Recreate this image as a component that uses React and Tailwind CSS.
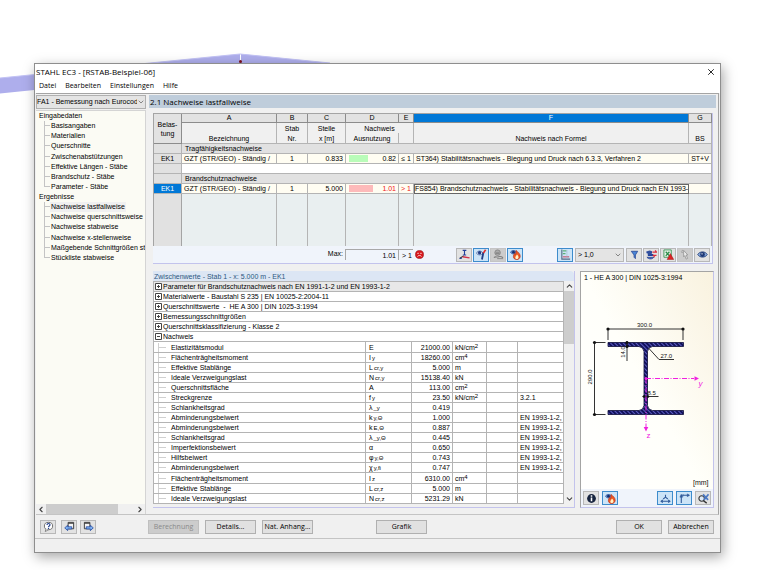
import React from 'react'
import clsx from 'clsx'
import { ChevronDown, ChevronUp, ChevronLeft, ChevronRight, X } from 'lucide-react'

const tree = [
  {
    title: 'Eingabedaten',
    items: ['Basisangaben', 'Materialien', 'Querschnitte', 'Zwischenabstützungen', 'Effektive Längen - Stäbe', 'Brandschutz - Stäbe', 'Parameter - Stäbe'],
  },
  {
    title: 'Ergebnisse',
    items: ['Nachweise lastfallweise', 'Nachweise querschnittsweise', 'Nachweise stabweise', 'Nachweise x-stellenweise', 'Maßgebende Schnittgrößen sta', 'Stückliste stabweise'],
  },
]

const groups = [
  'Parameter für Brandschutznachweis nach EN 1991-1-2 und EN 1993-1-2',
  'Materialwerte - Baustahl S 235 | EN 10025-2:2004-11',
  'Querschnittswerte  -  HE A 300 | DIN 1025-3:1994',
  'Bemessungsschnittgrößen',
  'Querschnittsklassifizierung - Klasse 2',
]

// [name, symbol, index, value, unit, exponent, reference]
const values = [
  ['Elastizitätsmodul', 'E', '', '21000.00', 'kN/cm', '2', ''],
  ['Flächenträgheitsmoment', 'I', 'y', '18260.00', 'cm', '4', ''],
  ['Effektive Stablänge', 'L', 'cr,y', '5.000', 'm', '', ''],
  ['Ideale Verzweigungslast', 'N', 'cr,y', '15138.40', 'kN', '', ''],
  ['Querschnittsfläche', 'A', '', '113.00', 'cm', '2', ''],
  ['Streckgrenze', 'f', 'y', '23.50', 'kN/cm', '2', '3.2.1'],
  ['Schlankheitsgrad', 'λ', '_y', '0.419', '', '', ''],
  ['Abminderungsbeiwert', 'k', 'y,Θ', '1.000', '', '', 'EN 1993-1-2,'],
  ['Abminderungsbeiwert', 'k', 'E,Θ', '0.887', '', '', 'EN 1993-1-2,'],
  ['Schlankheitsgrad', 'λ', '_y,Θ', '0.445', '', '', 'EN 1993-1-2,'],
  ['Imperfektionsbeiwert', 'α', '', '0.650', '', '', 'EN 1993-1-2,'],
  ['Hilfsbeiwert', 'φ', 'y,Θ', '0.743', '', '', 'EN 1993-1-2,'],
  ['Abminderungsbeiwert', 'χ', 'y,fi', '0.747', '', '', 'EN 1993-1-2,'],
  ['Flächenträgheitsmoment', 'I', 'z', '6310.00', 'cm', '4', ''],
  ['Effektive Stablänge', 'L', 'cr,z', '5.000', 'm', '', ''],
  ['Ideale Verzweigungslast', 'N', 'cr,z', '5231.29', 'kN', '', ''],
]

const icons = {
  help: (
    <>
      <ellipse cx="6" cy="5.5" rx="4.5" ry="4" fill="#fff" stroke="#666" />
      <path d="M3 9l-.5 2.5L6 9.5" fill="#fff" stroke="#666" strokeWidth=".8" />
      <path d="M4.4 4.4c0-2.2 3.4-2.2 3.2 0C7.5 5.5 6 5.3 6 6.6M6 7.4v1.2" fill="none" stroke="#23408e" strokeWidth="1.3" />
    </>
  ),
  prev: (
    <>
      <path d="M4.5 1.5h6v7h-6z" fill="#f4f4f4" stroke="#333" />
      <path d="M4.5 2.5h6" stroke="#333" />
      <path d="M.8 7.5L4 4.6v1.7h4.5v2.4H4v1.8z" fill="#7db1f2" stroke="#1d3f96" strokeWidth=".8" />
    </>
  ),
  next: (
    <>
      <path d="M1.5 1.5h6v7h-6z" fill="#f4f4f4" stroke="#333" />
      <path d="M1.5 2.5h6" stroke="#333" />
      <path d="M11.2 7.5L8 4.6v1.7H3.5v2.4H8v1.8z" fill="#7db1f2" stroke="#1d3f96" strokeWidth=".8" />
    </>
  ),
  beam: (
    <>
      <path d="M4 1.5h4M6 1.5v5M4.2 6.5h3.6" fill="none" stroke="#24409a" strokeWidth="1.2" />
      <path d="M1 10l4-2.5" stroke="#333" strokeWidth="1.2" />
      <path d="M4 8.5l7.5 1.2" stroke="#d03048" strokeWidth="1.6" />
      <path d="M.5 10.3h2.5" stroke="#24409a" strokeWidth="1.2" />
    </>
  ),
  eyeMember: (
    <>
      <path d="M.5 4.5C2 1.5 6 1.5 7.5 4.5C6 7 2 7 .5 4.5z" fill="#fff" stroke="#234a94" strokeWidth=".8" />
      <circle cx="4" cy="4.2" r="1.9" fill="#1f3c86" />
      <path d="M6.5 11.5L8 4" stroke="#1f3c86" strokeWidth="2" />
      <path d="M8 4.5L10.5 .8" stroke="#e02a2a" strokeWidth="1.8" />
    </>
  ),
  weight: (
    <>
      <circle cx="5" cy="4" r="3" fill="#aaa" stroke="#868686" />
      <path d="M3 4.5h4M1 9.5c2-2 3 0 5-1s3-.5 5 1" fill="none" stroke="#7d7d7d" strokeWidth="1.2" />
      <path d="M4.5 10.5h6.5" stroke="#868686" />
    </>
  ),
  fire: (
    <>
      <path d="M.5 3.5C2 1 5.5 1 7 3.5C5.5 6 2 6 .5 3.5z" fill="#6f9ad8" stroke="#234a94" strokeWidth=".8" />
      <circle cx="3.8" cy="3.5" r="1.5" fill="#16306e" />
      <path d="M6.5 1.5c2.5 2 4.8 4 4.6 6.6c-.2 2.3-2 3.4-3.8 3.4c-2 0-3.7-1.2-3.6-3.4c0-1.5 1-2.3 1.3-3.4l1.4 1.3z" fill="#ee5a22" stroke="#b32410" strokeWidth=".7" />
      <path d="M7.6 6c1.6 1.7 1.9 2.7 1.6 3.8c-.5 1.5-3.1 1.5-3.4 0c-.2-1.2.8-1.7 1.1-2.6z" fill="#fff3c9" />
    </>
  ),
  bars: (
    <>
      <path d="M2 .5v10.5h9" fill="none" stroke="#526a86" strokeWidth="1.2" />
      <path d="M3 2h4M3 5h3" stroke="#5cae78" strokeWidth="1.5" />
      <path d="M3 8.5h7" stroke="#c87c94" strokeWidth="1.7" />
      <path d="M7.5 1v10" stroke="#9db4c8" strokeWidth=".6" />
    </>
  ),
  filter: <path d="M2.5 2.5h7L7 6.5v4L5.5 9V6.5z" fill="#4a86d8" stroke="#23408e" strokeWidth=".8" />,
  eyeSync: (
    <>
      <path d="M.5 3.5h6M2 6.5h6" stroke="#20409a" strokeWidth="2" />
      <path d="M1 9c2 2.5 6 2.5 7.5 0z" fill="#3d68c8" stroke="#1d3580" strokeWidth=".7" />
      <circle cx="4" cy="4" r="2.5" fill="#304f9e" />
      <path d="M7 3.5h4.5L10 1.5M11.5 7H8l1.5 2" fill="none" stroke="#dc2c3c" strokeWidth="1.3" />
    </>
  ),
  excel: (
    <>
      <path d="M1 1h8v8H1z" fill="#eaf5ea" stroke="#2b8c48" strokeWidth=".9" />
      <path d="M3 3l4 4.5M7 3L3 7.5" stroke="#2b8c48" strokeWidth="1.4" />
      <path d="M8 5l3.7 6.5H4.5z" fill="#da2326" stroke="#9c1414" strokeWidth=".5" />
    </>
  ),
  pick: (
    <>
      <path d="M4 1.5l4.5 5H6.7l1.6 3.8-1.5.7-1.5-3.8L4 8.5z" fill="#ededed" stroke="#8d8d8d" strokeWidth=".8" />
      <path d="M1 3l2 1M2.5 1v1.5" stroke="#999" />
    </>
  ),
  eye: (
    <>
      <path d="M.8 6C3 2.2 9 2.2 11.2 6C9 9.8 3 9.8.8 6z" fill="#86a8dc" stroke="#27437d" />
      <circle cx="6" cy="6" r="2.6" fill="#1c3774" />
      <circle cx="5.5" cy="5.3" r=".8" fill="#fff" />
    </>
  ),
  info: (
    <>
      <circle cx="6" cy="6" r="4.8" fill="#17243f" />
      <path d="M6 5v4M6 2.5V4" stroke="#fff" strokeWidth="1.7" />
    </>
  ),
  stress: (
    <>
      <path d="M6 2v3M3.5 6.5l2.5-2 2.5 2" fill="none" stroke="#315b9b" strokeWidth="1.2" />
      <path d="M1.5 9h9M3 7.5L1.2 9 3 10.5M9 7.5l1.8 1.5L9 10.5" fill="none" stroke="#315b9b" strokeWidth="1.2" />
    </>
  ),
  dims: (
    <>
      <path d="M2.5 11V2.5H11" fill="none" stroke="#315b9b" strokeWidth="1.2" />
      <path d="M1 4.5l1.5-3 1.5 3zM9 1l2.5 1.5L9 4zM4.5 1.2v2.6" fill="#315b9b" stroke="#315b9b" strokeWidth=".6" />
    </>
  ),
  zoomReset: (
    <>
      <circle cx="4" cy="6" r="3" fill="#dce9f8" stroke="#333" strokeWidth="1.2" />
      <path d="M6 8.5l3.5 2.5" stroke="#333" strokeWidth="1.5" />
      <path d="M5.5 1.5l5.5 6M11.5 1.5L6.5 7.5" stroke="#4a78c4" strokeWidth="1.8" />
    </>
  ),
}

function IconButton({ icon, label, active, disabled }) {
  return (
    <button
      aria-label={label}
      disabled={disabled}
      className={clsx(
        'flex h-[14px] w-[16px] shrink-0 items-center justify-center border',
        active ? 'border-[#3d8ccc] bg-[#cce4f7]' : disabled ? 'border-[#c4c4c4] bg-[#cccccc]' : 'border-[#b8b8b8] bg-[#e2e2e2]'
      )}
    >
      <svg viewBox="0 0 12 12" className="h-[11px] w-[11px]">{icons[icon]}</svg>
    </button>
  )
}

function DialogButton({ children, className, disabled }) {
  return (
    <button
      disabled={disabled}
      className={clsx(
        'h-[14px] shrink-0 border text-center font-["Open_Sans",sans-serif] text-[7px] leading-[12px]',
        disabled ? 'border-[#bfbfbf] bg-[#cccccc] text-[#8a8a8a]' : 'border-[#b0b0b0] bg-[#e1e1e1]',
        className
      )}
    >
      {children}
    </button>
  )
}

function Sidebar() {
  return (
    <aside className="flex w-[110px] shrink-0 flex-col pt-px">
      <div className="relative h-[14px]">
        <select aria-label="Bemessungsfall" className="block h-[14px] w-full appearance-none border border-[#b0b0b0] bg-[#e4e4e4] pr-1 text-[7px] leading-[12px]">
          <option>FA1 - Bemessung nach Eurocod</option>
        </select>
        <ChevronDown className="pointer-events-none absolute right-px top-[3px] h-2 w-2 bg-[#e4e4e4] text-[#555]" />
      </div>
      <nav className="mt-px flex min-h-0 flex-1 flex-col overflow-hidden border-r border-t border-[#d4d4d4] bg-[#fbfbf4]">
        <ul className="grid h-[152px] w-full text-[7px] leading-[10px]">
          {tree.map(g => (
            <React.Fragment key={g.title}>
              <li className="pl-[3px]">{g.title}</li>
              {g.items.map((item, i) => (
                <li key={item} className="flex whitespace-nowrap pl-2">
                  <span className="flex w-[6px] shrink-0 flex-col">
                    <span className="h-[5px] border-b border-l border-[#c4c4c4]" />
                    {i < g.items.length - 1 && <span className="flex-1 border-l border-[#c4c4c4]" />}
                  </span>
                  <a href="#" className={clsx('px-px', item === 'Nachweise lastfallweise' && 'bg-[#f0f0f0]')}>{item}</a>
                </li>
              ))}
            </React.Fragment>
          ))}
        </ul>
        <div className="mt-auto flex h-[10px] items-center bg-[#f0f0f0]">
          <ChevronLeft strokeWidth={3} className="h-[9px] w-[10px] text-[#444]" />
          <div className="h-full w-[72px] bg-[#cdcdcd]" />
          <ChevronRight strokeWidth={3} className="ml-auto h-[9px] w-[10px] text-[#444]" />
        </div>
      </nav>
    </aside>
  )
}

function ResultTable() {
  const cell = 'overflow-hidden whitespace-nowrap border-b border-r border-[#b4b4b4] p-0'
  const letter = 'border-b border-r border-[#8c8c8c] p-0 font-normal'
  const head = 'border-r border-[#b4b4b4] p-0 font-normal'
  const row = 'h-[10px] bg-[#fffdf2]'
  return (
    <table className="h-[133px] w-full table-fixed border-separate border-spacing-0 border-l border-t border-[#a4a4a4] text-[7px] leading-[9px]">
      <colgroup>
        <col className="w-[28px]" />
        <col className="w-[95px]" />
        <col className="w-[31px]" />
        <col className="w-[38px]" />
        <col className="w-[53px]" />
        <col className="w-[15px]" />
        <col />
        <col className="w-[23px]" />
      </colgroup>
      <thead className="bg-[#f0f0f0]">
        <tr className="h-[9px] bg-[#e2e2e2] leading-[8px]">
          <th rowSpan={3} className="border-b border-r border-[#8c8c8c] p-0 font-normal leading-[9px]">Belas-<br />tung</th>
          <th className={letter}>A</th>
          <th className={letter}>B</th>
          <th className={letter}>C</th>
          <th className={letter}>D</th>
          <th className={letter}>E</th>
          <th className="border-b border-r border-[#8c8c8c] bg-[#0078d7] p-0 font-normal text-white">F</th>
          <th className={letter}>G</th>
        </tr>
        <tr className="h-[10px]">
          <th className={head} />
          <th className={head}>Stab</th>
          <th className={head}>Stelle</th>
          <th colSpan={2} className={head}>Nachweis</th>
          <th className={head} />
          <th className={head} />
        </tr>
        <tr className="h-[11px]">
          <th className={clsx(head, 'border-b')}>Bezeichnung</th>
          <th className={clsx(head, 'border-b')}>Nr.</th>
          <th className={clsx(head, 'border-b')}>x [m]</th>
          <th className={clsx(head, 'border-b')}>Ausnutzung</th>
          <th className={clsx(head, 'border-b')} />
          <th className={clsx(head, 'border-b')}>Nachweis nach Formel</th>
          <th className={clsx(head, 'border-b')}>BS</th>
        </tr>
      </thead>
      <tbody>
        <tr className="h-[10px] bg-[#e1e1e1]">
          <td className={cell} />
          <td colSpan={7} className={clsx(cell, 'pl-[3px]')}>Tragfähigkeitsnachweise</td>
        </tr>
        <tr className={row}>
          <td className={clsx(cell, 'bg-[#e1e1e1] text-center')}>EK1</td>
          <td className={clsx(cell, 'pl-0.5')}>GZT (STR/GEO) - Ständig /</td>
          <td className={clsx(cell, 'text-center')}>1</td>
          <td className={clsx(cell, 'pr-0.5 text-right')}>0.833</td>
          <td className={cell}>
            <div className="flex items-center justify-between pl-[3px] pr-0.5">
              <span className="h-[7px] w-[19px] bg-[#b9fcb9]" />
              0.82
            </div>
          </td>
          <td className={clsx(cell, 'text-center')}>≤ 1</td>
          <td className={clsx(cell, 'pl-0.5')}>ST364) Stabilitätsnachweis - Biegung und Druck nach 6.3.3, Verfahren 2</td>
          <td className={clsx(cell, 'text-center')}>ST+V</td>
        </tr>
        <tr className="h-[10px] bg-white">
          <td className={clsx(cell, 'bg-[#e1e1e1]')} />
          <td colSpan={7} className={cell} />
        </tr>
        <tr className="h-[10px] bg-[#e1e1e1]">
          <td className={cell} />
          <td colSpan={7} className={clsx(cell, 'pl-[3px]')}>Brandschutznachweise</td>
        </tr>
        <tr className={row}>
          <td className={clsx(cell, 'bg-[#0078d7] text-center text-white')}>EK1</td>
          <td className={clsx(cell, 'pl-0.5')}>GZT (STR/GEO) - Ständig /</td>
          <td className={clsx(cell, 'text-center')}>1</td>
          <td className={clsx(cell, 'pr-0.5 text-right')}>5.000</td>
          <td className={clsx(cell, 'text-[#f01818]')}>
            <div className="flex items-center justify-between pl-[3px] pr-0.5">
              <span className="h-[7px] w-[24px] bg-[#fdbaba]" />
              1.01
            </div>
          </td>
          <td className={clsx(cell, 'text-center text-[#f01818]')}>&gt; 1</td>
          <td className={clsx(cell, 'pl-px outline outline-1 -outline-offset-1 outline-[#666]')}>FS854) Brandschutznachweis - Stabilitätsnachweis - Biegung und Druck nach EN 1993-1-2</td>
          <td className={cell} />
        </tr>
        <tr className="bg-[#e9eff0]">
          <td className="border-r border-[#a4a4a4] bg-[#e1e1e1] p-0" />
          {[0, 1, 2, 3, 4, 5, 6].map(i => (
            <td key={i} className="border-r border-[#b4b4b4] p-0" />
          ))}
        </tr>
      </tbody>
    </table>
  )
}

function ResultToolbar() {
  return (
    <div className="flex h-[18px] items-center border-b border-[#c3c3ec] bg-[#f0f4fb] pr-0.5 text-[7px]">
      <label htmlFor="max" className="w-[190px] shrink-0 text-right">Max:</label>
      <input id="max" readOnly defaultValue="1.01" className="ml-0.5 h-[11px] w-[54px] border border-b-0 border-[#a8a8a8] pr-0.5 text-right" />
      <span className="h-[11px] w-[14px] border-t border-[#a8a8a8] pr-px text-right leading-[11px]">&gt; 1</span>
      <svg viewBox="0 0 10 10" className="ml-0.5 h-[9px] w-[9px] shrink-0">
        <circle cx="5" cy="5" r="4.5" fill="#d8171c" stroke="#8c0c10" strokeWidth=".6" />
        <path d="M2.6 3.7h1.6M5.8 3.7h1.6M2.8 7.2c1-1.5 3.4-1.5 4.4 0" fill="none" stroke="#fff" strokeWidth=".9" />
      </svg>
      <div className="ml-8 flex gap-px">
        <IconButton icon="beam" label="Querschnitt anzeigen" />
        <IconButton icon="eyeMember" label="Stab anzeigen" active />
        <IconButton icon="weight" label="Lasten" disabled />
        <IconButton icon="fire" label="Brandschutz" active />
      </div>
      <div className="ml-auto flex gap-px">
        <IconButton icon="bars" label="Farbbalken" active />
        <div className="relative mx-px h-[14px] w-[49px]">
          <select aria-label="Ausnutzung filtern" className="block h-[14px] w-full appearance-none border border-[#b8b8b8] bg-[#e4e4e4] pl-0.5 leading-[12px]">
            <option>&gt; 1,0</option>
          </select>
          <ChevronDown className="pointer-events-none absolute right-0.5 top-[3px] h-2 w-2 text-[#555]" />
        </div>
        <IconButton icon="filter" label="Filter" />
        <IconButton icon="eyeSync" label="Sichtbarkeit" />
        <IconButton icon="excel" label="Excel-Export" />
        <IconButton icon="pick" label="Auswählen" disabled />
        <IconButton icon="eye" label="Ansicht" />
      </div>
    </div>
  )
}

function Toggle({ open }) {
  return (
    <svg viewBox="0 0 7 7" className="mr-px h-[7px] w-[7px] shrink-0">
      <path d={open ? 'M.5.5h6v6h-6zM2 3.5h3' : 'M.5.5h6v6h-6zM2 3.5h3M3.5 2v3'} fill="#fff" stroke="#444" />
    </svg>
  )
}

function Details() {
  const cell = 'overflow-hidden whitespace-nowrap border-b border-r border-[#b4b4b4] p-0'
  return (
    <section className="min-w-0 flex-1 border-b border-r border-[#c3c3ec] pb-[3px]">
      <h2 className="h-[10px] rounded-tr bg-[#dce6f4] pl-px text-[7px] leading-[11px] text-[#2c567f]">Zwischenwerte - Stab 1 - x: 5.000 m - EK1</h2>
      <div className="flex">
        <table className="h-[223px] min-w-0 flex-1 table-fixed border-separate border-spacing-0 border-l border-t border-[#b4b4b4] bg-white text-[7px] leading-[9px]">
          <colgroup>
            <col />
            <col className="w-[46px]" />
            <col className="w-[41px]" />
            <col className="w-[34px]" />
            <col className="w-[31px]" />
            <col className="w-[46px]" />
          </colgroup>
          <tbody>
            {groups.map((g, i) => (
              <tr key={g} className={i === 0 ? 'bg-[#e8e8e8]' : 'bg-white'}>
                <td colSpan={6} className={cell}>
                  <div className="flex items-center whitespace-pre pl-px"><Toggle />{g}</div>
                </td>
              </tr>
            ))}
            <tr>
              <td colSpan={6} className={cell}>
                <div className="flex items-center pl-px"><Toggle open />Nachweis</div>
              </td>
            </tr>
            {values.map(([name, sym, idx, val, unit, exp, ref], i) => (
              <tr key={i}>
                <td className={cell}>
                  <div className="flex items-center pl-1">
                    <span className="h-[9px] border-l border-[#d0d0d0]" />
                    <span className="mr-[5px] w-[7px] border-t border-[#d0d0d0]" />
                    {name}
                  </div>
                </td>
                <td className={clsx(cell, 'pl-[3px]')}>
                  <div className="flex h-[9px] gap-px">{sym}<span className="pt-px text-[6px] leading-[8px]">{idx}</span></div>
                </td>
                <td className={clsx(cell, 'pr-0.5 text-right')}>{val}</td>
                <td className={clsx(cell, 'pl-0.5')}>
                  <div className="flex h-[9px]">{unit}<span className="text-[6px] leading-[7px]">{exp}</span></div>
                </td>
                <td className={cell} />
                <td className={clsx(cell, 'pl-0.5')}>{ref}</td>
              </tr>
            ))}
          </tbody>
        </table>
        <div className="flex w-[10px] flex-col items-center bg-[#f0f0f0]">
          <ChevronUp strokeWidth={3} className="h-[10px] w-[9px] text-[#444]" />
          <div className="h-[53px] w-full bg-[#cdcdcd]" />
          <ChevronDown strokeWidth={3} className="mt-auto h-[10px] w-[9px] text-[#444]" />
        </div>
      </div>
    </section>
  )
}

function SectionDrawing() {
  return (
    <svg viewBox="582 284 131 205" className="h-[205px] w-full font-['Liberation_Sans',sans-serif]">
      <defs>
        <pattern id="hatch" width="3" height="3" patternUnits="userSpaceOnUse" patternTransform="rotate(-45)">
          <rect width="3" height="3" fill="#11115c" />
          <rect width="1" height="3" fill="#5c5cc0" />
        </pattern>
      </defs>
      <path
        d="M608.5 342.5h75.5v4h-31q-4.5.5-5 5v54q.5 4.5 5 5h31v4h-75.5v-4h31q4.5-.5 5-5v-54q-.5-4.5-5-5h-31z"
        fill="url(#hatch)"
        stroke="#0c0c38"
        strokeWidth=".8"
      />
      <g fill="none" stroke="#333" strokeWidth="1">
        <path d="M608.5 340v-11h75v11M606 342.5h-11v72h11M627.5 341v20M649 348l10.5 11.5h15M643 396.5h16" />
      </g>
      <g fill="#111">
        <circle cx="608.5" cy="329" r="1.6" />
        <circle cx="683.5" cy="329" r="1.6" />
        <circle cx="595" cy="342.5" r="1.6" />
        <circle cx="595" cy="414.5" r="1.6" />
        <circle cx="627.5" cy="342.5" r="1.5" />
        <circle cx="627.5" cy="346.5" r="1.5" />
        <circle cx="644.5" cy="396.5" r="1.3" />
        <circle cx="648.5" cy="396.5" r="1.3" />
      </g>
      <g fill="#111" fontSize="6">
        <text x="645" y="327" textAnchor="middle">300.0</text>
        <text x="661" y="357.5">27.0</text>
        <text x="648" y="395">8.5</text>
        <text transform="translate(592.5 377) rotate(-90)" textAnchor="middle">290.0</text>
        <text transform="translate(625 352) rotate(-90)" textAnchor="middle">14.0</text>
      </g>
      <g stroke="#f020e0" fill="none">
        <path d="M646.5 378.5h48" strokeDasharray="5 1.5 1 1.5" />
        <path d="M646.5 378.5v49" strokeDasharray="5 1.5 1 1.5" />
      </g>
      <g fill="#f020e0">
        <circle cx="646.5" cy="378.5" r="1.5" />
        <path d="M695 376.2l4.5 2.3-4.5 2.3zM644.2 427l2.3 4.5 2.3-4.5z" />
        <text x="699" y="386" fontSize="8" fontStyle="italic">y</text>
        <text x="647" y="438" fontSize="8">z</text>
      </g>
      <text x="709" y="485" fontSize="7" textAnchor="end" fill="#111">[mm]</text>
    </svg>
  )
}

function SectionPanel() {
  return (
    <section className="flex w-[134px] shrink-0 flex-col border border-b-[#c3c3ec] border-l-[#a4a4a4] border-r-[#c3c3ec] border-t-[#a4a4a4] bg-linear-to-tr from-white via-[#fffffa] to-[#f9f2df]">
      <h2 className="pl-[3px] text-[7px] leading-[12px]">1 - HE A 300 | DIN 1025-3:1994</h2>
      <SectionDrawing />
      <div className="flex flex-1 items-center gap-[3px] bg-[#f0f4fb] px-0.5">
        <IconButton icon="info" label="Info" />
        <IconButton icon="fire" label="Brandschutz" active />
        <span className="flex-1" />
        <IconButton icon="stress" label="Spannungspunkte" active />
        <IconButton icon="dims" label="Bemaßung" active />
        <IconButton icon="zoomReset" label="Ansicht zurücksetzen" />
      </div>
    </section>
  )
}

function Backdrop() {
  return (
    <svg viewBox="0 0 340 100" className="absolute left-0 top-0 h-[100px] w-[340px]">
      <path d="M0 78L240 54V69L0 93.5z" fill="#aeaeec" />
      <path d="M241 54L330 63L340 78L241 69z" fill="#aeaeec" />
      <path d="M0 78L240 54L330 63" fill="none" stroke="#c2c2f4" />
      <circle cx="240.5" cy="61.5" r="1.5" fill="#7c1020" />
    </svg>
  )
}

export default function App() {
  return (
    <div className="relative bg-white pb-[17px] pl-[34px] pr-[39px] pt-[63px] font-['Liberation_Sans',sans-serif] text-black">
      <Backdrop />
      <main className="relative border border-[#8e8e8e] bg-[#f0f0f0] shadow-[2px_4px_12px_rgba(0,0,0,0.35)]">
        {/* Title bar */}
        <header className="bg-white font-['Open_Sans',sans-serif]">
          <div className="flex h-[15px] items-center justify-between pl-px pr-1">
            <h1 className="text-[8px] leading-[15px]">STAHL EC3 - [RSTAB-Beispiel-06]</h1>
            <button aria-label="Schließen"><X className="h-[10px] w-[10px]" /></button>
          </div>
          <nav className="flex h-[14px] gap-[9px] pl-1 text-[7px] leading-[14px]">
            {['Datei', 'Bearbeiten', 'Einstellungen', 'Hilfe'].map(m => (
              <button key={m} className="h-[14px]">{m}</button>
            ))}
          </nav>
        </header>

        {/* Body */}
        <div className="mx-px flex gap-[3px] border-b border-r border-t border-[#a4a4a4] border-b-[#c4c4c4] pr-0.5">
          <Sidebar />
          <div className="min-w-0 flex-1 pb-[6px] pt-px">
            <h2 className="h-[13px] bg-[#bfcddb] pl-px font-['Open_Sans',sans-serif] text-[8px] leading-[13px]">2.1 Nachweise lastfallweise</h2>
            <div className="ml-1 mr-[3px] mt-[5px] border-r border-[#c3c3ec]">
              <ResultTable />
              <ResultToolbar />
            </div>
            <div className="ml-1 mr-0.5 mt-[7px] flex gap-[5px]">
              <Details />
              <SectionPanel />
            </div>
          </div>
        </div>

        {/* Footer */}
        <footer className="flex h-[24px] items-center border-b border-[#c4c4c4] pl-[5px] pr-[6px]">
          <IconButton icon="help" label="Hilfe" />
          <div className="ml-[5px] flex gap-[3px]">
            <IconButton icon="prev" label="Vorherige Maske" />
            <IconButton icon="next" label="Nächste Maske" />
          </div>
          <div className="ml-[52px] flex gap-[6px]">
            <DialogButton disabled className="w-[51px]">Berechnung</DialogButton>
            <DialogButton className="w-[51px]">Details...</DialogButton>
            <DialogButton className="w-[51px]">Nat. Anhang...</DialogButton>
          </div>
          <DialogButton className="ml-[63px] w-[51px]">Grafik</DialogButton>
          <div className="ml-auto flex gap-[6px]">
            <DialogButton className="w-[46px]">OK</DialogButton>
            <DialogButton className="w-[46px]">Abbrechen</DialogButton>
          </div>
        </footer>
        <div className="h-[13px]" />
      </main>
    </div>
  )
}
